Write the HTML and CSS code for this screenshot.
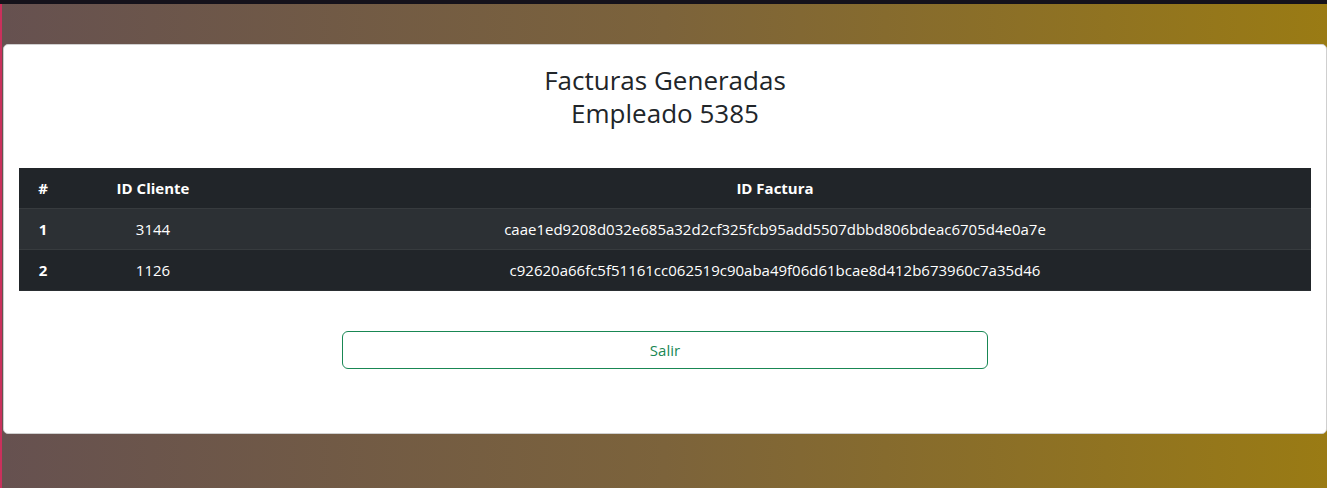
FILE: index.html
```html
<!DOCTYPE html>
<html lang="es">
<head>
<meta charset="utf-8">
<title>Facturas Generadas</title>
<link rel="stylesheet" href="styles.css">
</head>
<body>
<div class="page">
  <div class="card">
    <div class="card-body">
      <h3 class="title"><span class="tline">Facturas Generadas</span><span class="tline">Empleado 5385</span></h3>
      <table class="tbl">
        <thead>
          <tr>
            <th class="c1">#</th>
            <th class="c2">ID Cliente</th>
            <th>ID Factura</th>
          </tr>
        </thead>
        <tbody>
          <tr class="odd">
            <th>1</th>
            <td>3144</td>
            <td>caae1ed9208d032e685a32d2cf325fcb95add5507dbbd806bdeac6705d4e0a7e</td>
          </tr>
          <tr>
            <th>2</th>
            <td>1126</td>
            <td>c92620a66fc5f51161cc062519c90aba49f06d61bcae8d412b673960c7a35d46</td>
          </tr>
        </tbody>
      </table>
      <div class="actions">
        <button class="btn-out">Salir</button>
      </div>
    </div>
  </div>
</div>
</body>
</html>
```
FILE: styles.css
```css
html, body {
  margin: 0;
  padding: 0;
  height: 100%;
}
body {
  font-family: "Open Sans", "Noto Sans", sans-serif;
  font-size: 16px;
  color: #212529;
  background: #15121b;
}
.page {
  box-sizing: border-box;
  margin-top: 4px;
  border-left: 2px solid #c9315c;
  padding: 40px 0 0 1px;
  background: linear-gradient(to right, #665150 0%, #7c633b 50%, #9a7b14 100%);
  height: calc(100% - 4px);
}
.card {
  box-sizing: border-box;
  height: 390px;
  background: #fff;
  border: 1px solid #cfcfcf;
  border-radius: 5px;
}
.card-body {
  padding: 19px 15px 0 15px;
}
.title {
  margin: 0;
  text-align: center;
  font-weight: 400;
  font-size: 26px;
  color: #212529;
}
.tline {
  display: block;
  height: 33px;
  line-height: 33px;
  overflow: visible;
}
.tbl {
  margin-top: 38px;
  width: 100%;
  border-collapse: collapse;
  color: #fff;
  background: #212529;
  font-size: 15px;
}
.tbl th, .tbl td {
  padding: 8px;
  line-height: 24px;
  text-align: center;
  border-bottom: 1px solid #373b3e;
}
.tbl th {
  font-weight: 700;
}
.tbl td {
  font-weight: 400;
}
.tbl tbody tr:last-child th, .tbl tbody tr:last-child td {
  border-bottom: 1px solid #2a2e32;
}
.c1 { width: 32px; }
.c2 { width: 156px; }
.tbl tr.odd {
  background: #2c3034;
}
.actions {
  display: flex;
  justify-content: center;
  margin-top: 40px;
}
.btn-out {
  width: 50%;
  height: 38px;
  font-family: inherit;
  font-size: 15px;
  color: #198754;
  background: transparent;
  border: 1px solid #198754;
  border-radius: 6px;
}
```
